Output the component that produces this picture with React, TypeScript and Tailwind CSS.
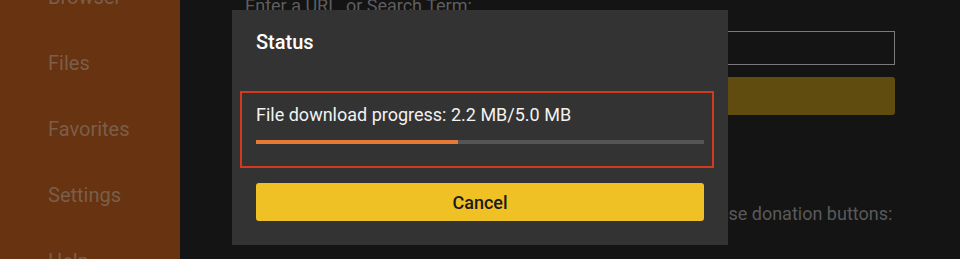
const menu = ['Browser', 'Files', 'Favorites', 'Settings', 'Help'];

export default function App() {
  return (
    <div className="relative flex h-[259px] w-[960px] overflow-hidden bg-[#141414] font-['Roboto',sans-serif]">
      {/* Sidebar (dimmed behind the dialog) */}
      <aside className="w-[180px] shrink-0 bg-[#673310]">
        <ul className="-mt-[36px] pl-[48px]">
          {menu.map((item) => (
            <li key={item} className="text-[20px] leading-[66px] text-[#7b5e4a]">
              {item}
            </li>
          ))}
        </ul>
      </aside>

      {/* Main page (dimmed) */}
      <main className="flex flex-1 flex-col px-[65px]">
        <p className="-mt-[3px] text-[18px] leading-none whitespace-nowrap text-[#5e5e5e]">
          Enter a URL, or Search Term:
        </p>
        <div className="mt-[16px] h-[34px] border border-[#7a7a7a]" />
        <div className="mt-[12px] h-[38px] rounded-[3px] bg-[#5f4c0e]" />
        <p className="mt-[90px] text-[18px] leading-none whitespace-nowrap text-[#5a5a5a]">
          To support the development of this great app, please use these donation buttons:
        </p>
      </main>

      {/* Status dialog */}
      <div className="absolute left-[232px] top-[10px] flex w-[496px] flex-col bg-[#333333] pt-[22px] pb-[24px]">
        <h2 className="pl-[24px] text-[20px] leading-none font-medium text-white">Status</h2>
        <div className="mt-[39px] ml-[8px] w-[474px] border-2 border-[#d3391f] pt-[13px] pr-[8px] pb-[22px] pl-[14px]">
          <p className="text-[18px] leading-none text-[#f2f2f2]">File download progress: 2.2 MB/5.0 MB</p>
          <div className="mt-[16px] h-[4px] w-[448px] bg-[#555555]">
            <div className="h-full w-[202px] bg-[#e47a33]" />
          </div>
        </div>
        <button className="mt-[15px] ml-[24px] flex h-[38px] w-[448px] items-center justify-center rounded-[3px] bg-[#f0c124] text-[18px] font-medium text-[#1a1a1a]">
          Cancel
        </button>
      </div>
    </div>
  );
}
